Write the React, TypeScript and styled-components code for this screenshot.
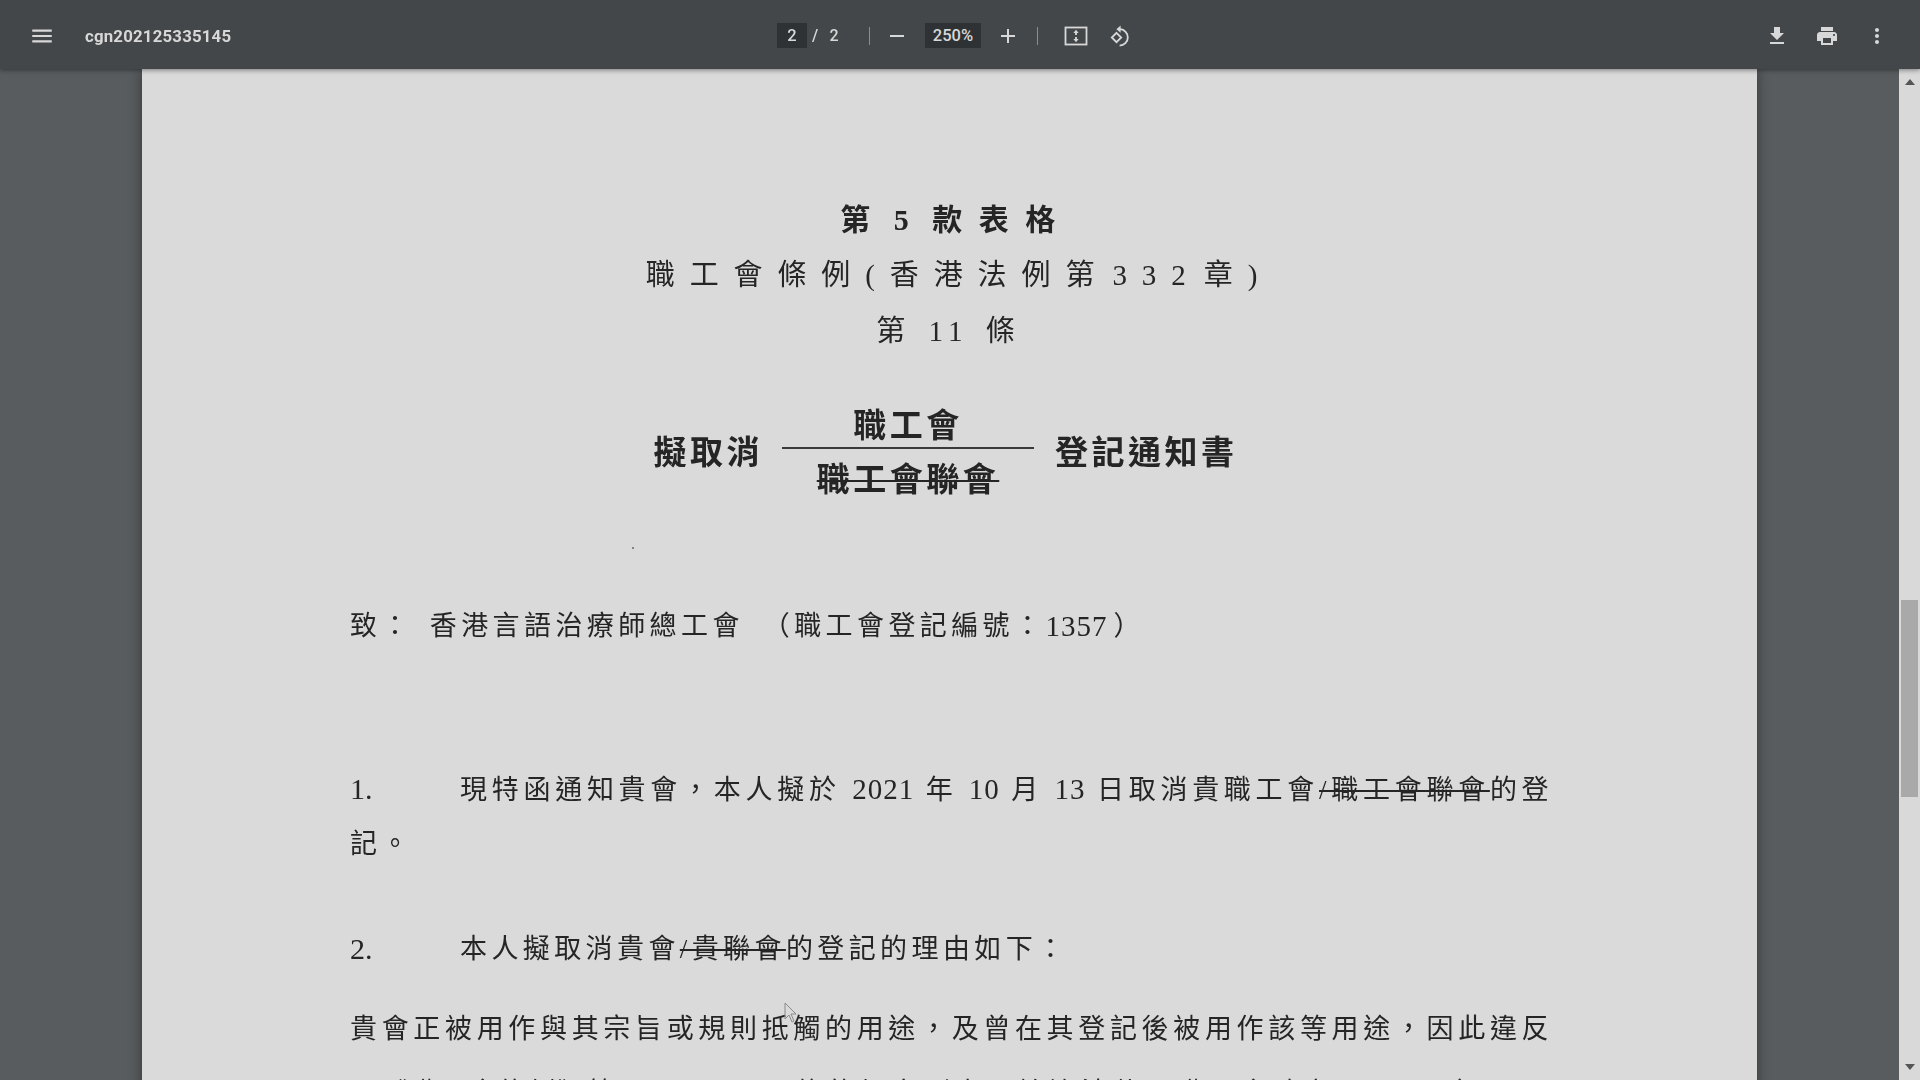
import * as React from 'react'
import styled, { createGlobalStyle } from 'styled-components'

const GlobalStyle = createGlobalStyle`
  html, body {
    margin: 0;
    padding: 0;
    background: #585c5e;
    overflow: hidden;
  }
`

const Screen = styled.div`
  position: relative;
  display: flex;
  flex-direction: column;
  width: 1920px;
  height: 1080px;
  overflow: hidden;
  filter: blur(0.55px);
`

const Toolbar = styled.header`
  position: relative;
  z-index: 2;
  box-sizing: border-box;
  display: flex;
  align-items: center;
  flex: 0 0 69px;
  padding-top: 2px;
  background: #434749;
  box-shadow: 0 1px 5px rgba(0, 0, 0, 0.45);
  color: #d8d8d8;
  font-family: Roboto, 'Liberation Sans', sans-serif;
`

const LeftGroup = styled.div`
  display: flex;
  align-items: center;
  flex: 0 0 777px;
  padding-left: 28px;
  box-sizing: border-box;
`

const FileName = styled.span`
  margin-left: 29px;
  font-size: 16.8px;
  font-weight: 700;
  letter-spacing: 0.2px;
`

const CenterGroup = styled.div`
  display: flex;
  align-items: center;
`

const RightGroup = styled.div`
  display: flex;
  align-items: center;
  gap: 22px;
  margin-left: auto;
  padding-right: 29px;
`

const IconButton = styled.span<{ $ml?: number }>`
  display: flex;
  align-items: center;
  justify-content: center;
  width: 28px;
  height: 28px;
  margin-left: ${p => p.$ml ?? 0}px;
  svg {
    display: block;
  }
`

const ValueBox = styled.span<{ $w: number; $ml?: number }>`
  display: flex;
  align-items: center;
  justify-content: center;
  width: ${p => p.$w}px;
  height: 25px;
  margin-left: ${p => p.$ml ?? 0}px;
  background: #2f3234;
  font-size: 16.5px;
  font-weight: 500;
`

const PageLabel = styled.span<{ $w: number }>`
  width: ${p => p.$w}px;
  text-align: center;
  font-size: 16px;
  font-weight: 500;
`

const Divider = styled.span<{ $ml: number }>`
  width: 1px;
  height: 18px;
  margin-left: ${p => p.$ml}px;
  background: #8b8e90;
`

const Body = styled.div`
  display: flex;
  flex: 1;
  min-height: 0;
`

const Viewer = styled.main`
  flex: 1;
  min-width: 0;
  padding: 0 142px 0 142px;
  overflow: hidden;
`

const Page = styled.article`
  box-sizing: border-box;
  width: 1615px;
  height: 1400px;
  padding: 122px 204px 0 208px;
  background: #dadada;
  box-shadow: 0 0 12px rgba(0, 0, 0, 0.4);
  color: #252525;
  font-family: 'Liberation Serif', 'Noto Sans CJK TC', serif;
`

const TitleLine = styled.h2<{ $size: number; $spacing: number; $word: number; $bold?: boolean; $shift: number; $top?: number }>`
  margin: 0 0 0 ${p => p.$shift}px;
  height: 56px;
  line-height: ${p => 56 + (p.$top ?? 0) * 2}px;
  text-align: center;
  white-space: pre;
  font-size: ${p => p.$size}px;
  font-weight: ${p => (p.$bold ? 700 : 400)};
  letter-spacing: ${p => p.$spacing}px;
  word-spacing: ${p => p.$word}px;
`

const FractionRow = styled.div`
  display: flex;
  align-items: center;
  justify-content: center;
  gap: 19px;
  height: 110px;
  margin-top: 38px;
  padding-right: 12px;
  font-size: 33px;
  font-weight: 700;
  letter-spacing: 3.5px;
  white-space: pre;
`

const SideText = styled.span<{ $ml?: number }>`
  margin: 0 0 5px ${p => p.$ml ?? 0}px;
`

const Fraction = styled.div`
  display: flex;
  flex-direction: column;
  align-items: center;
  width: 252px;
  height: 110px;
`

const FractionPart = styled.div<{ $h: number; $lh: number }>`
  height: ${p => p.$h}px;
  line-height: ${p => p.$lh}px;
`

const FractionRule = styled.div`
  align-self: stretch;
  flex: 0 0 2px;
  background: #3a3a3a;
`

const TextLine = styled.p<{ $mt?: number; $h?: number }>`
  display: flex;
  margin: ${p => p.$mt ?? 0}px 0 0 0;
  height: ${p => p.$h ?? 54}px;
  line-height: 54px;
  font-size: 27px;
  letter-spacing: 4.4px;
  white-space: nowrap;
`

const Marker = styled.span`
  flex: 0 0 110px;
  font-size: 30px;
  letter-spacing: 0;
`

const Fill = styled.span`
  flex: 1;
  min-width: 0;
  white-space: normal;
  text-align: justify;
  text-align-last: justify;
`

const Latin = styled.span`
  font-size: 29px;
  letter-spacing: 1px;
`

const Tight = styled.span`
  letter-spacing: 2.4px;
`

const Struck = styled.span`
  text-decoration: line-through;
  text-decoration-thickness: 2px;
`

const Gap = styled.span<{ $w: number }>`
  display: inline-block;
  width: ${p => p.$w}px;
`

const Speck = styled.span`
  position: absolute;
  left: 632px;
  top: 547px;
  width: 2px;
  height: 2px;
  border-radius: 50%;
  background: #666;
`

const Cursor = styled.svg`
  position: absolute;
  left: 784px;
  top: 1002px;
`

const Scrollbar = styled.aside`
  display: flex;
  flex-direction: column;
  align-items: center;
  flex: 0 0 21px;
  background: #d9d9d9;
`

const ScrollArrow = styled.span<{ $down?: boolean }>`
  flex: 0 0 0;
  margin: ${p => (p.$down ? '8px 0 10px' : '10px 0 8px')};
  border-left: 5px solid transparent;
  border-right: 5px solid transparent;
  border-top: ${p => (p.$down ? '6px solid #555' : '0')};
  border-bottom: ${p => (p.$down ? '0' : '6px solid #555')};
`

const ScrollTrack = styled.div`
  flex: 1;
  align-self: stretch;
  padding: 507px 2px 0;
`

const ScrollThumb = styled.div`
  height: 197px;
  background: #a9a9a9;
`

const Icon = ({ d, size = 24 }: { d: string; size?: number }) => (
  <svg width={size} height={size} viewBox="0 0 24 24" fill="#d8d8d8">
    <path d={d} />
  </svg>
)

const FitIcon = () => (
  <svg width="24" height="24" viewBox="0 0 24 24" fill="none">
    <rect x="1.5" y="3.5" width="21" height="17" stroke="#d8d8d8" strokeWidth="1.8" />
    <path d="M12 5.8l2.6 3.2h-1.7v2h-1.8V9H9.4zM12 18.2l-2.6-3.2h1.7v-2h1.8v2h1.7z" fill="#d8d8d8" />
  </svg>
)

const RotateIcon = () => (
  <svg width="24" height="24" viewBox="0 0 24 24" fill="none">
    <path d="M8.5 8.8L13.2 13.5 8.5 18.2 3.8 13.5z" stroke="#d8d8d8" strokeWidth="1.8" />
    <path d="M11 5.2h1.2a8.2 8.2 0 0 1 7.6 8.2 8.2 8.2 0 0 1-8.2 8.2" stroke="#d8d8d8" strokeWidth="1.8" />
    <path d="M12.6 1.6v7.2L8.4 5.2z" fill="#d8d8d8" />
  </svg>
)

export default function App() {
  return (
    <Screen>
      <GlobalStyle />
      <Toolbar>
        <LeftGroup>
          <IconButton>
            <Icon size={26} d="M3 18h18v-2H3v2zm0-5h18v-2H3v2zm0-7v2h18V6H3z" />
          </IconButton>
          <FileName>cgn202125335145</FileName>
        </LeftGroup>
        <CenterGroup>
          <ValueBox $w={30}>2</ValueBox>
          <PageLabel $w={16}>/</PageLabel>
          <PageLabel $w={22}>2</PageLabel>
          <Divider $ml={24} />
          <IconButton $ml={13}>
            <Icon d="M19 13H5v-2h14v2z" />
          </IconButton>
          <ValueBox $w={56} $ml={14}>250%</ValueBox>
          <IconButton $ml={13}>
            <Icon d="M19 13h-6v6h-2v-6H5v-2h6V5h2v6h6v2z" />
          </IconButton>
          <Divider $ml={15} />
          <IconButton $ml={24}>
            <FitIcon />
          </IconButton>
          <IconButton $ml={16}>
            <RotateIcon />
          </IconButton>
        </CenterGroup>
        <RightGroup>
          <IconButton>
            <Icon d="M19 9h-4V3H9v6H5l7 7 7-7zM5 18v2h14v-2H5z" />
          </IconButton>
          <IconButton>
            <Icon d="M19 8H5c-1.66 0-3 1.34-3 3v6h4v4h12v-4h4v-6c0-1.66-1.34-3-3-3zm-3 11H8v-5h8v5zm3-7c-.55 0-1-.45-1-1s.45-1 1-1 1 .45 1 1-.45 1-1 1zm-1-9H6v4h12V3z" />
          </IconButton>
          <IconButton>
            <Icon d="M12 8c1.1 0 2-.9 2-2s-.9-2-2-2-2 .9-2 2 .9 2 2 2zm0 2c-1.1 0-2 .9-2 2s.9 2 2 2 2-.9 2-2-.9-2-2-2zm0 6c-1.1 0-2 .9-2 2s.9 2 2 2 2-.9 2-2-.9-2-2-2z" />
          </IconButton>
        </RightGroup>
      </Toolbar>
      <Body>
        <Viewer>
          <Page>
            <TitleLine $size={30} $spacing={16.5} $word={-17} $bold $shift={9} $top={1}>第 5 款表格</TitleLine>
            <TitleLine $size={29} $spacing={14.9} $word={-19} $shift={15}>職工會條例(香港法例第 332 章)</TitleLine>
            <TitleLine $size={29} $spacing={6} $word={4} $shift={-6}>第 11 條</TitleLine>
            <FractionRow>
              <SideText>擬取消</SideText>
              <Fraction>
                <FractionPart $h={50} $lh={59}>職工會</FractionPart>
                <FractionRule />
                <FractionPart $h={58} $lh={62}><Struck>職工會聯會</Struck></FractionPart>
              </Fraction>
              <SideText $ml={2}>登記通知書</SideText>
            </FractionRow>
            <TextLine $mt={92}>
              致：<Gap $w={17} />香港言語治療師總工會<Gap $w={19} />（職工會登記編號：<Latin>1357</Latin><Gap $w={6} />）
            </TextLine>
            <TextLine $mt={109} $h={55}>
              <Marker>1.</Marker>
              <Fill>
                現特函通知貴會，本人擬於 <Latin>2021</Latin> 年 <Latin>10</Latin> 月 <Latin>13</Latin> 日取消貴職工會<Struck>/職工會聯會</Struck>的登
              </Fill>
            </TextLine>
            <TextLine>記。</TextLine>
            <TextLine $mt={51}>
              <Marker>2.</Marker>
              <span>本人擬取消貴會<Struck>/貴聯會</Struck>的登記的理由如下：</span>
            </TextLine>
            <TextLine $mt={26} $h={63}>
              <Fill>貴會正被用作與其宗旨或規則抵觸的用途，及曾在其登記後被用作該等用途，因此違反</Fill>
            </TextLine>
            <TextLine>
              <Fill>
                <Tight>了《職工會條例》</Tight>第 <Latin>18(1)(b)(iii)</Latin> 條的規定（由開始違法使用職工會確立至 <Latin>2021</Latin> 年 <Latin>6</Latin> 月
              </Fill>
            </TextLine>
          </Page>
        </Viewer>
        <Scrollbar>
          <ScrollArrow />
          <ScrollTrack>
            <ScrollThumb />
          </ScrollTrack>
          <ScrollArrow $down />
        </Scrollbar>
      </Body>
      <Speck />
      <Cursor width="14" height="22" viewBox="0 0 14 22" fill="none">
        <path d="M1 1v16l4-4 3 7 2-1-3-7h5z" stroke="#8a8a8a" strokeWidth="1" />
      </Cursor>
    </Screen>
  )
}
